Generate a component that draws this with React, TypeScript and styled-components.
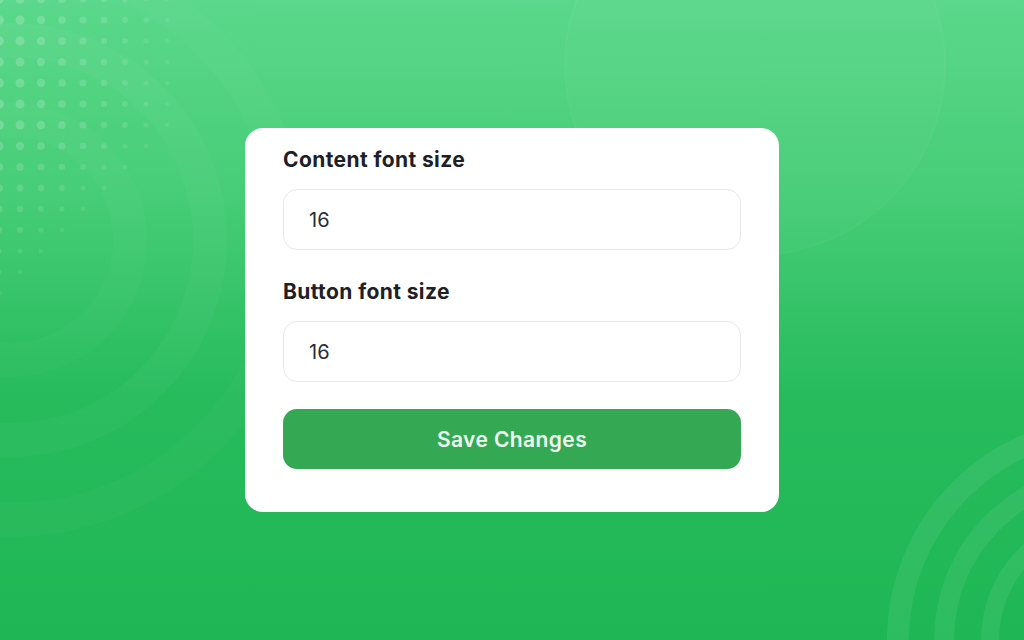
import React, { useState } from "react";
import styled, { createGlobalStyle } from "styled-components";

const GlobalStyle = createGlobalStyle`
  html, body {
    margin: 0;
    padding: 0;
  }
  body {
    font-family: Inter, "Noto Sans", "Liberation Sans", sans-serif;
  }
`;

const Page = styled.div`
  position: relative;
  width: 100%;
  height: 640px;
  overflow: hidden;
  display: flex;
  align-items: center;
  justify-content: center;
  background: linear-gradient(180deg, #5bd88b 0%, #47cd77 30%, #27bb5c 62%, #1fb755 100%);
`;

const Decor = styled.svg`
  position: absolute;
  inset: 0;
  width: 100%;
  height: 100%;
  pointer-events: none;
`;

const Card = styled.form`
  position: relative;
  width: 534px;
  box-sizing: border-box;
  padding: 18px 38px 43px;
  background: #ffffff;
  border-radius: 18px;
  display: flex;
  flex-direction: column;
`;

const Field = styled.div`
  display: flex;
  flex-direction: column;
  gap: 15px;
  margin-bottom: 28px;
`;

const Label = styled.label`
  font-size: 21px;
  line-height: 28px;
  font-weight: 700;
  color: #1d2026;
  letter-spacing: 0.4px;
`;

const Input = styled.input`
  height: 61px;
  box-sizing: border-box;
  padding: 0 25px;
  border: 1px solid #e9e9ec;
  border-radius: 14px;
  font-family: inherit;
  font-size: 20px;
  color: #2b2d31;
  background: #fff;
  outline: none;
`;

const SaveButton = styled.button`
  height: 60px;
  margin-top: -1px;
  border: none;
  border-radius: 14px;
  background: #35a854;
  color: #eefbf1;
  font-family: inherit;
  font-size: 21px;
  font-weight: 600;
  letter-spacing: 0.4px;
  cursor: pointer;
`;

// dot grid in the top-left corner, dots shrinking towards the card
const dots: { x: number; y: number; r: number; o: number }[] = [];
for (let row = 0; row < 15; row++) {
  for (let col = 0; col < 9; col++) {
    const x = -1 + col * 21;
    const y = -1 + row * 21;
    const fade = 1 - col / 9 - Math.max(0, row - 6) / 9;
    if (fade <= 0.08) continue;
    dots.push({ x, y, r: 2 + 2.8 * fade, o: 0.07 + 0.13 * fade });
  }
}

export default function App() {
  const [contentSize, setContentSize] = useState("16");
  const [buttonSize, setButtonSize] = useState("16");

  return (
    <Page>
      <GlobalStyle />
      <Decor viewBox="0 0 1024 640" preserveAspectRatio="none">
        <g fill="none" stroke="#ffffff">
          <circle cx="10" cy="240" r="120" strokeOpacity="0.025" strokeWidth="34" />
          <circle cx="10" cy="240" r="200" strokeOpacity="0.03" strokeWidth="34" />
          <circle cx="10" cy="240" r="280" strokeOpacity="0.025" strokeWidth="34" />
          <circle cx="755" cy="65" r="190" strokeOpacity="0.04" strokeWidth="2" />
          <circle cx="1110" cy="640" r="212" strokeOpacity="0.07" strokeWidth="22" />
          <circle cx="1110" cy="640" r="166" strokeOpacity="0.07" strokeWidth="20" />
          <circle cx="1110" cy="640" r="120" strokeOpacity="0.07" strokeWidth="18" />
        </g>
        <circle cx="755" cy="65" r="190" fill="#ffffff" fillOpacity="0.025" />
        {dots.map((d, i) => (
          <circle key={i} cx={d.x} cy={d.y} r={d.r} fill="#ffffff" fillOpacity={d.o} />
        ))}
      </Decor>
      <Card onSubmit={(e) => e.preventDefault()}>
        <Field>
          <Label htmlFor="content-size">Content font size</Label>
          <Input
            id="content-size"
            type="text"
            value={contentSize}
            onChange={(e) => setContentSize(e.target.value)}
          />
        </Field>
        <Field>
          <Label htmlFor="button-size">Button font size</Label>
          <Input
            id="button-size"
            type="text"
            value={buttonSize}
            onChange={(e) => setButtonSize(e.target.value)}
          />
        </Field>
        <SaveButton type="submit">Save Changes</SaveButton>
      </Card>
    </Page>
  );
}
